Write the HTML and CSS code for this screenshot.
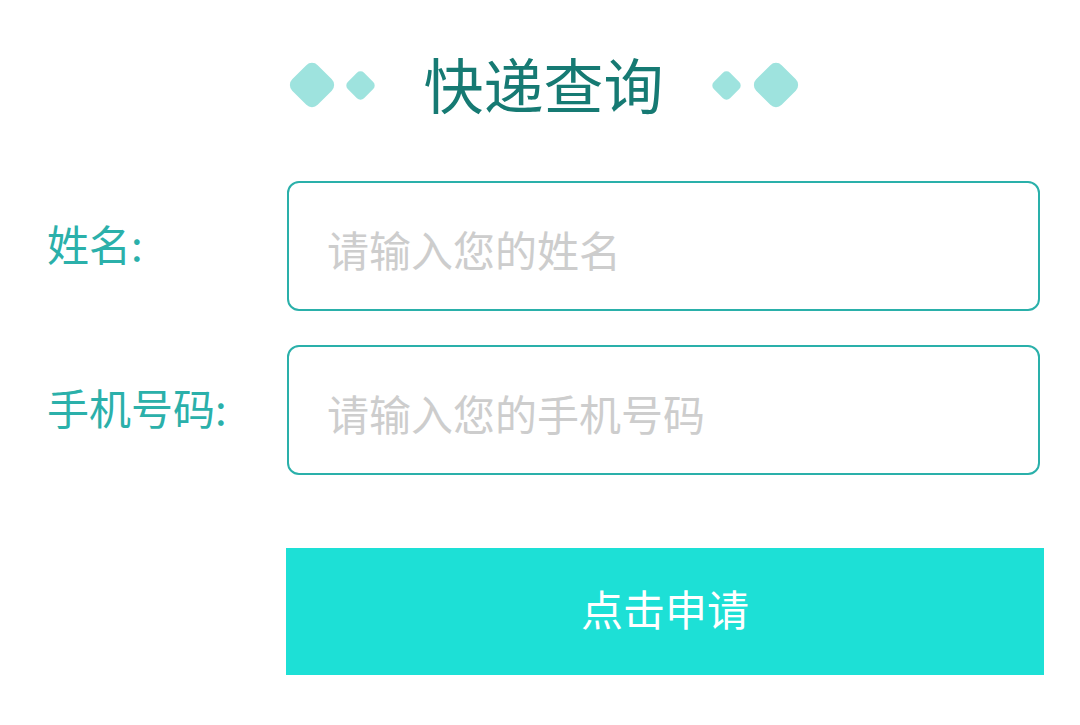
FILE: index.html
```html
<!DOCTYPE html>
<html>
<head>
<meta charset="utf-8">
<link rel="stylesheet" href="styles.css">
</head>
<body>
<div class="page">
	<div class="title-row">
		<span class="dia big"></span>
		<span class="dia small"></span>
		<h1 class="title">快递查询</h1>
		<span class="dia small"></span>
		<span class="dia big last"></span>
	</div>

	<div class="form">
		<label class="label" for="name">姓名:</label>
		<input class="field" id="name" type="text" placeholder="请输入您的姓名">

		<label class="label" for="phone">手机号码:</label>
		<input class="field" id="phone" type="text" placeholder="请输入您的手机号码">

		<span></span>
		<button class="submit">点击申请</button>
	</div>
</div>
</body>
</html>
```

FILE: styles.css
```css
body {
	margin: 0;
	background: #fff;
	font-family: "Noto Sans CJK SC", "Noto Sans", sans-serif;
}
.page {
	width: 1080px;
	height: 725px;
	overflow: hidden;
}
/* title with the diamonds either side */
.title-row {
	display: flex;
	align-items: center;
	justify-content: center;
	height: 60px;
	padding-top: 55px;
	padding-left: 7px;
}
.title {
	margin: 0 51px 4px 52px;
	font-size: 60px;
	font-weight: 400;
	line-height: 60px;
	color: #167a73;
}
.dia {
	display: block;
	flex: none;
	background: #9ee3de;
	transform: rotate(45deg);
}
.dia.big {
	width: 36px;
	height: 36px;
	border-radius: 8px;
	margin-right: 19px;
}
.dia.big.last {
	margin-right: 0;
}
.dia.small {
	width: 23px;
	height: 23px;
	border-radius: 5px;
}
.dia.small + .dia.big {
	margin-left: 20px;
}
.form {
	display: grid;
	grid-template-columns: 240px 753px;
	row-gap: 34px;
	align-items: center;
	padding: 66px 0 0 47px;
}
.label {
	font-size: 42px;
	color: #2bb0aa;
	line-height: 1;
	padding-bottom: 6px;
}
.field {
	box-sizing: border-box;
	height: 130px;
	width: 100%;
	margin: 0;
	padding: 4px 0 0 38px;
	border: 2px solid #2ab0aa;
	border-radius: 12px;
	font-family: inherit;
	font-size: 42px;
	color: #333;
	outline: none;
}
.field::placeholder {
	color: #cdcdcd;
}
.submit {
	margin-top: 39px;
	margin-left: -1px;
	width: 758px;
	height: 127px;
	padding: 0 0 8px;
	border: 0;
	background: #1de0d6;
	color: #fff;
	font-family: inherit;
	font-size: 42px;
}
```
